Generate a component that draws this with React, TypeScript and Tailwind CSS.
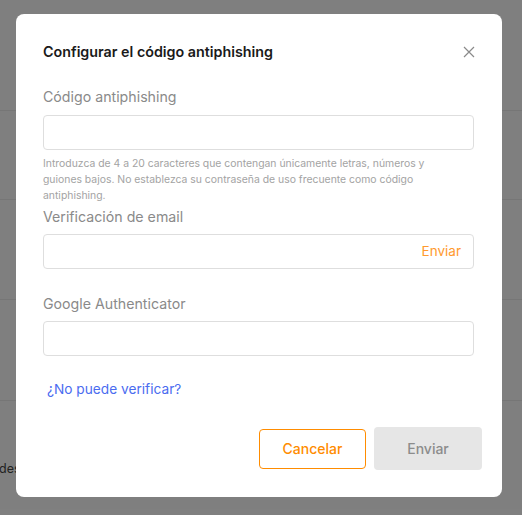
import React from "react";

export default function App() {
  return (
    <div className="relative h-[515px] w-[522px] overflow-hidden bg-white font-['Inter',sans-serif]">
      {/* page behind */}
      <div className="flex flex-col">
        <div className="h-[111px] border-b border-[#ececec]" />
        <div className="h-[89px] border-b border-[#ececec]" />
        <div className="h-[100px] border-b border-[#ececec]" />
        <div className="h-[101px] border-b border-[#ececec]" />
        <div className="ml-[-1px] mt-[59px] text-[12.5px] leading-[18px] text-[#444]">des</div>
      </div>

      {/* overlay */}
      <div className="absolute inset-0 bg-black/50">
        <div className="ml-[16px] mt-[14px] w-[486px] rounded-[8px] bg-white pb-[27px] pt-[27px]">
          <div className="pl-[27px] pr-[28px]">
            <div className="flex h-[22px] items-center justify-between">
              <h2 className="text-[14.3px] font-semibold leading-[22px] text-[#1a1a1a]">
                Configurar el código antiphishing
              </h2>
              <svg width="12" height="12" viewBox="0 0 12 12" className="mr-[-1px]">
                <path d="M1 1L11 11M11 1L1 11" stroke="#8a8a8a" strokeWidth="1.2" fill="none" />
              </svg>
            </div>

            <div className="mt-[25px] text-[14.2px] leading-[18px] text-[#8a8a8a]">Código antiphishing</div>
            <div className="mt-[9px] h-[35px] rounded-[4px] border border-[#dedede]" />
            <p className="mt-[6px] w-[400px] text-[10.4px] leading-[16px] text-[#a3a3a3]">
              Introduzca de 4 a 20 caracteres que contengan únicamente letras, números y guiones bajos. No establezca su contraseña de uso frecuente como código antiphishing.
            </p>

            <div className="mt-[4px] text-[14.2px] leading-[18px] text-[#8a8a8a]">Verificación de email</div>
            <div className="mt-[8px] flex h-[35px] items-center justify-end rounded-[4px] border border-[#dedede] pr-[12px]">
              <span className="text-[13.5px] text-[#ff9a2e]">Enviar</span>
            </div>

            <div className="mt-[26px] text-[14.2px] leading-[18px] text-[#8a8a8a]">Google Authenticator</div>
            <div className="mt-[8px] h-[35px] rounded-[4px] border border-[#dedede]" />

            <div className="mt-[23px] pl-[4px] text-[13.7px] leading-[20px] text-[#4a6cf0]">¿No puede verificar?</div>
          </div>

          <div className="mt-[28px] flex items-center justify-end gap-[8px] pr-[20px]">
            <button className="flex h-[40px] w-[107px] items-center justify-center rounded-[4px] border border-[#ff8c00] text-[14px] font-medium text-[#ff8c00]">
              Cancelar
            </button>
            <button className="flex h-[43px] w-[108px] items-center justify-center rounded-[4px] bg-[#e6e6e6] text-[14px] font-medium text-[#8c8c8c]">
              Enviar
            </button>
          </div>
        </div>
      </div>
    </div>
  );
}
